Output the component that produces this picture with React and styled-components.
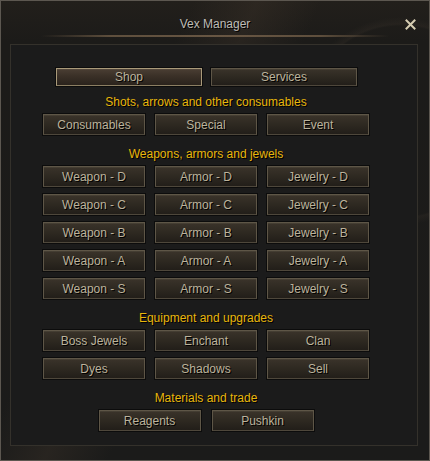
import React from 'react'
import styled, { createGlobalStyle } from 'styled-components'

const GlobalStyle = createGlobalStyle`
  html, body {
    margin: 0;
    padding: 0;
    background: #111;
  }
  body {
    font-family: "Liberation Sans", Arial, sans-serif;
  }
`

const Window = styled.div`
  width: 430px;
  height: 461px;
  box-sizing: border-box;
  border: 1px solid #5c5750;
  background:
    radial-gradient(circle at 400px 120px, transparent 95px, rgba(60, 52, 44, 0.25) 97px, transparent 104px),
    linear-gradient(115deg, transparent 30%, rgba(70, 58, 46, 0.3) 40%, transparent 50%),
    linear-gradient(180deg, #221f1b 0px, #1c1b19 40px, #1b1b1a 100%);
  overflow: hidden;
`

const TitleBar = styled.div`
  height: 34px;
  display: grid;
  grid-template-columns: 1fr auto 1fr;
  align-items: center;
  padding: 9px 13px 0 13px;
  box-sizing: border-box;
`

const Title = styled.div`
  grid-column: 2;
  color: #bdbbb6;
  font-size: 12px;
  padding-top: 2px;
  text-shadow: 1px 1px 0 #000;
`

const CloseBtn = styled.button`
  justify-self: end;
  width: 12px;
  height: 12px;
  padding: 0;
  margin-top: 3px;
  border: none;
  background: none;
  display: flex;
  align-items: center;
  justify-content: center;
  cursor: pointer;
`

const Separator = styled.div`
  height: 2px;
  margin: 0 40px;
  background: linear-gradient(90deg, transparent, #6a5843 20%, #74604a 50%, #6a5843 80%, transparent);
  opacity: 0.85;
`

const Panel = styled.div`
  margin: 7px 11px 0 9px;
  height: 402px;
  box-sizing: border-box;
  border: 1px solid #34312b;
  background: #1b1b1b;
  padding: 23px 0 0 32px;
`

const Content = styled.div`
  width: 326px;
  display: flex;
  flex-direction: column;
`

const TopRow = styled.div`
  display: flex;
  gap: 9px;
  padding-left: 13px;
`

const SectionTitle = styled.div`
  margin: ${p => p.$top}px 0 4px;
  height: 16px;
  line-height: 16px;
  text-align: center;
  color: #e8b60c;
  font-size: 12px;
  text-shadow: 1px 1px 0 #000;
`

const Grid = styled.div`
  display: grid;
  grid-template-columns: repeat(3, 102px);
  column-gap: 10px;
  row-gap: 7px;
`

const BottomRow = styled.div`
  display: flex;
  justify-content: center;
  gap: 11px;
`

const Button = styled.button`
  width: ${p => (p.$wide ? 146 : 102)}px;
  height: ${p => (p.$wide ? 18 : 21)}px;
  box-sizing: border-box;
  padding: 0;
  border: 1px solid ${p => (p.$active ? '#a99a7a' : '#5e5647')};
  border-bottom-color: ${p => (p.$active ? '#8c7f63' : '#4e473b')};
  background: ${p =>
    p.$active
      ? 'linear-gradient(180deg, #4a3e33 0%, #3a3027 45%, #2a231c 100%)'
      : 'linear-gradient(180deg, #3a332a 0%, #2e2921 50%, #221e19 100%)'};
  box-shadow: 0 0 0 1px rgba(0, 0, 0, 0.55), inset 0 1px 0 rgba(255, 235, 200, 0.06);
  color: #bcb39c;
  font-family: "Liberation Sans", Arial, sans-serif;
  font-size: 12px;
  line-height: 1;
  text-shadow: 1px 1px 0 #000;
  cursor: pointer;
`

const CloseIcon = () => (
  <svg width="11" height="11" viewBox="0 0 11 11">
    <path d="M1.5 1.5 L9.5 9.5 M9.5 1.5 L1.5 9.5" stroke="#d6cdb2" strokeWidth="2" strokeLinecap="square" />
  </svg>
)

const sections = [
  {
    title: 'Shots, arrows and other consumables',
    buttons: ['Consumables', 'Special', 'Event'],
  },
  {
    title: 'Weapons, armors and jewels',
    buttons: ['D', 'C', 'B', 'A', 'S'].flatMap(g => [
      `Weapon - ${g}`,
      `Armor - ${g}`,
      `Jewelry - ${g}`,
    ]),
  },
  {
    title: 'Equipment and upgrades',
    buttons: ['Boss Jewels', 'Enchant', 'Clan', 'Dyes', 'Shadows', 'Sell'],
  },
]

export default function App() {
  return (
    <>
      <GlobalStyle />
      <Window>
        <TitleBar>
          <Title>Vex Manager</Title>
          <CloseBtn aria-label="Close">
            <CloseIcon />
          </CloseBtn>
        </TitleBar>
        <Separator />
        <Panel>
          <Content>
            <TopRow>
              <Button $wide $active>Shop</Button>
              <Button $wide>Services</Button>
            </TopRow>
            {sections.map((s, i) => (
              <React.Fragment key={s.title}>
                <SectionTitle $top={i === 0 ? 8 : 11}>{s.title}</SectionTitle>
                <Grid>
                  {s.buttons.map(b => (
                    <Button key={b}>{b}</Button>
                  ))}
                </Grid>
              </React.Fragment>
            ))}
            <SectionTitle $top={11}>Materials and trade</SectionTitle>
            <BottomRow>
              <Button>Reagents</Button>
              <Button>Pushkin</Button>
            </BottomRow>
          </Content>
        </Panel>
      </Window>
    </>
  )
}
